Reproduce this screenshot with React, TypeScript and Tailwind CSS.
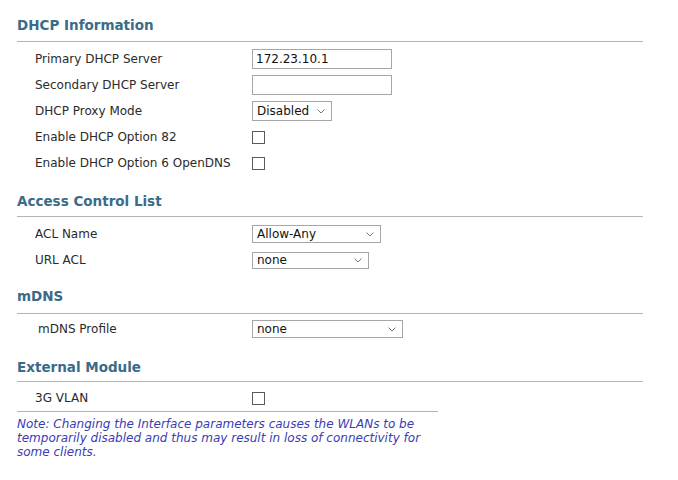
import React from 'react';

const font = { fontFamily: '"DejaVu Sans", Verdana, sans-serif' };

function Heading({ title, pad }: { title: string; pad: string }) {
  return (
    <div className={`border-b border-[#b4b4b4] w-[626px] ${pad}`}>
      <h2 className="text-[13.5px] leading-[16px] font-bold text-[#3a6b88]">{title}</h2>
    </div>
  );
}

function Row({ label, children, indent = 'pl-[18px]' }: { label: string; children: React.ReactNode; indent?: string }) {
  return (
    <div className="flex h-[26px] items-center">
      <div className={`w-[235px] text-[12px] text-[#2a2a2a] ${indent}`}>{label}</div>
      <div className="flex items-center">{children}</div>
    </div>
  );
}

function TextBox({ value = '' }: { value?: string }) {
  return (
    <div className="flex h-[20px] w-[140px] items-center border border-[#a6a6a6] pl-[3px] text-[12px] text-[#111]">
      {value}
    </div>
  );
}

function Chevron() {
  return (
    <svg width="8" height="5" viewBox="0 0 8 5" className="shrink-0">
      <path d="M0.5 0.5 L4 4 L7.5 0.5" fill="none" stroke="#7a7a7a" strokeWidth="1" />
    </svg>
  );
}

function Select({ value, w, h }: { value: string; w: string; h: string }) {
  return (
    <div className={`flex items-center justify-between border border-[#a6a6a6] pl-[4px] pr-[6px] text-[12px] text-[#111] ${w} ${h}`}>
      <span>{value}</span>
      <Chevron />
    </div>
  );
}

function Check() {
  return <div className="h-[13px] w-[13px] border border-[#5a5a5a] bg-white" />;
}

export default function App() {
  return (
    <div className="min-h-screen w-[678px] bg-white pl-[17px]" style={font}>
      <Heading title="DHCP Information" pad="pt-[17px] pb-[8px]" />
      <div className="mt-[4px]">
        <Row label="Primary DHCP Server"><TextBox value="172.23.10.1" /></Row>
        <Row label="Secondary DHCP Server"><TextBox /></Row>
        <Row label="DHCP Proxy Mode"><Select value="Disabled" w="w-[80px]" h="h-[20px]" /></Row>
        <Row label="Enable DHCP Option 82"><Check /></Row>
        <Row label="Enable DHCP Option 6 OpenDNS"><Check /></Row>
      </div>

      <Heading title="Access Control List" pad="pt-[17px] pb-[7px]" />
      <div className="mt-[4px]">
        <Row label="ACL Name"><Select value="Allow-Any" w="w-[129px]" h="h-[18px]" /></Row>
        <Row label="URL ACL"><Select value="none" w="w-[117px]" h="h-[17px]" /></Row>
      </div>

      <Heading title="mDNS" pad="pt-[15px] pb-[9px]" />
      <div className="mt-[2px]">
        <Row label="mDNS Profile" indent="pl-[21px]"><Select value="none" w="w-[151px]" h="h-[18px]" /></Row>
      </div>

      <Heading title="External Module" pad="pt-[17px] pb-[6px]" />
      <div className="mt-[3px]">
        <Row label="3G VLAN"><Check /></Row>
      </div>
      <div className="w-[421px] border-t border-[#b4b4b4]" />
      <p className="mt-[5px] w-[425px] text-[12px] italic leading-[14px] text-[#3b3bb5]">
        Note: Changing the Interface parameters causes the WLANs to be temporarily disabled and thus may result in loss of connectivity for some clients.
      </p>
    </div>
  );
}
